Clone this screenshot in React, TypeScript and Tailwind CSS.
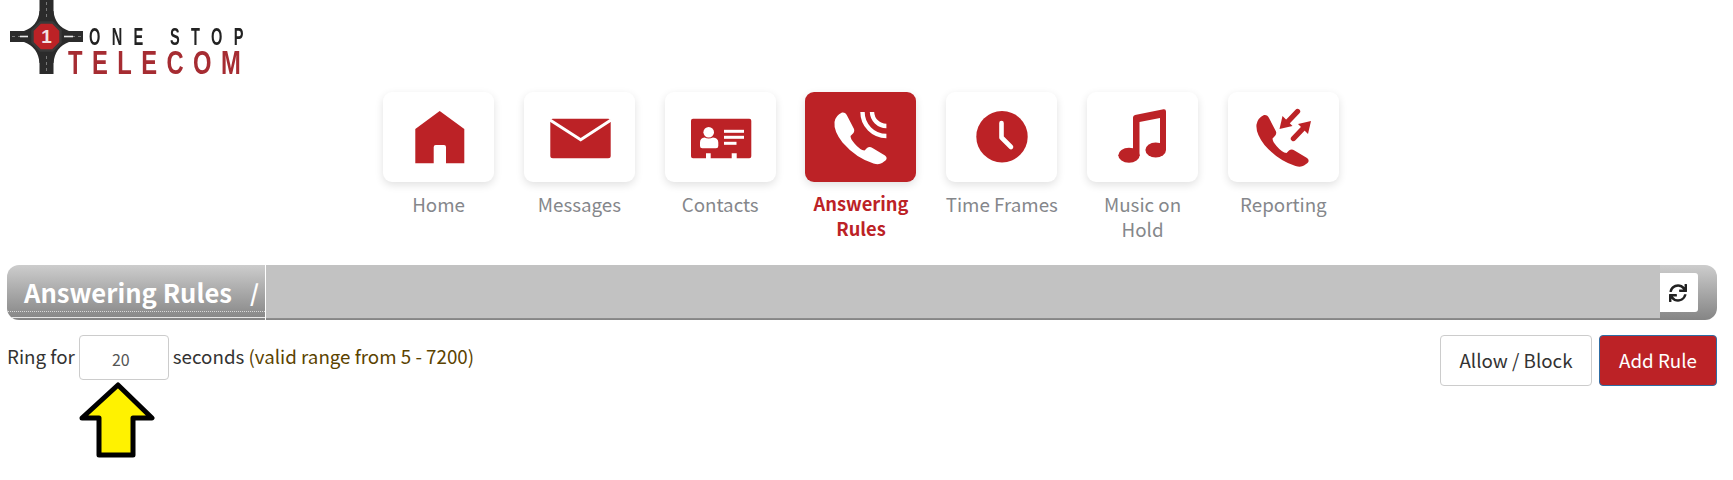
import React from "react";
import { FaSync } from "react-icons/fa";

const RED = "#bc2226";

const PhoneShape = ({ fill }: { fill: string }) => (
  <path
    fill={fill}
    d="M37 20.5Q40.5 20 42 23.5L49 37Q50 40 47 42.5L45.5 44Q45.5 47 49.5 51.5Q55 58 59.5 58.5L62 56Q64.5 54 67.5 56L80 63.5Q83 66 80.5 68.5L77 71Q74 73 68.5 71.5Q51 66 37.5 50.5Q28.5 39 29.5 30Q30.5 23.5 37 20.5Z"
  />
);

const icons: Record<string, (c: string) => React.ReactNode> = {
  home: (c) => (
    <path
      fill={c}
      d="M56.7 19L81.3 37V71.3H63V55Q63 53 61 53H52.7Q50.7 53 50.7 55V71.3H32.3V37Z"
    />
  ),
  mail: (c) => (
    <>
      <rect x="26.3" y="26.8" width="60.4" height="39.4" rx="2.5" fill={c} />
      <path d="M26 28L56.7 47.8L87 28" fill="none" stroke="#fff" strokeWidth="3" />
    </>
  ),
  contact: (c) => (
    <>
      <path
        fill={c}
        d="M28 26.8H84.3Q86.3 26.8 86.3 28.8V64.2Q86.3 66.2 84.3 66.2H71.7V61.2H66.7V66.2H45.7V61.2H41V66.2H28Q26 66.2 26 64.2V28.8Q26 26.8 28 26.8Z"
      />
      <circle cx="43.7" cy="40.2" r="5.3" fill="#fff" />
      <path
        fill="#fff"
        d="M35 54V50.5Q35 46 39.5 45.5Q43.7 47.5 48 45.5Q53.3 46 53.3 50.5V54Q53.3 56.2 51 56.2H37.3Q35 56.2 35 54Z"
      />
      <rect x="59" y="37.8" width="20" height="3" fill="#fff" />
      <rect x="59" y="43.8" width="20" height="3" fill="#fff" />
      <rect x="59" y="49.8" width="12.5" height="3" fill="#fff" />
    </>
  ),
  answer: (c) => (
    <>
      <PhoneShape fill={c} />
      <path
        d="M57.5 20A24 24 0 0 0 81.4 44M67 20A14.4 14.4 0 0 0 81.4 34"
        fill="none"
        stroke={c}
        strokeWidth="4.4"
      />
    </>
  ),
  clock: (c) => (
    <>
      <circle cx="56" cy="44.7" r="25.7" fill={c} />
      <path
        d="M55.5 31V45.5L65 55"
        fill="none"
        stroke="#fff"
        strokeWidth="4.6"
        strokeLinecap="round"
        strokeLinejoin="round"
      />
    </>
  ),
  music: (c) => (
    <>
      <path
        fill={c}
        d="M46 25.5Q46 23.5 48 23L76.5 17.3Q79 17 79 19.5V58H73V26L52.5 30V63.5H46Z"
      />
      <ellipse cx="42" cy="63.2" rx="10.7" ry="7.5" fill={c} />
      <ellipse cx="68.7" cy="58" rx="10.3" ry="7.5" fill={c} />
    </>
  ),
  report: (c) => (
    <>
      <g transform="translate(-1 2.5)">
        <PhoneShape fill={c} />
      </g>
      <path d="M69.5 19.5L59 30.5" stroke={c} strokeWidth="5.4" strokeLinecap="round" />
      <path d="M51.5 37L54.5 24L64.5 34Z" fill={c} />
      <path d="M65.5 46.5L76 35.5" stroke={c} strokeWidth="5.4" strokeLinecap="round" />
      <path d="M83 29L80 42L70 32Z" fill={c} />
    </>
  ),
};

const items = [
  { key: "home", label: "Home" },
  { key: "mail", label: "Messages" },
  { key: "contact", label: "Contacts" },
  { key: "answer", label: "Answering Rules", active: true },
  { key: "clock", label: "Time Frames" },
  { key: "music", label: "Music on Hold" },
  { key: "report", label: "Reporting" },
];

function Logo() {
  return (
    <svg width="250" height="78" viewBox="0 0 250 78" className="-ml-[7px] block blur-[0.5px]">
      <rect x="10" y="31" width="73" height="11" fill="#2b2b2b" />
      <rect x="39.5" y="0" width="14" height="74" fill="#2b2b2b" />
      <path
        d="M39.5 11Q38 26 24 31V42Q38 47 39.5 63H53.5Q55 47 69 42V31Q55 26 53.5 11Z"
        fill="#2b2b2b"
      />
      <path
        d="M12 36.5H27M66 36.5H81M46.5 2V17M46.5 56V72"
        stroke="#9a9a9a"
        strokeWidth="0.7"
        strokeDasharray="3 3"
      />
      <path d="M64 36.5H73" stroke="#e8e8e8" strokeWidth="1.6" />
      <path d="M20 36.5H28" stroke="#e8e8e8" strokeWidth="1.6" />
      <path
        d="M40.5 22.5H52.5L60.5 30.5V42.5L52.5 50.5H40.5L32.5 42.5V30.5Z"
        fill="#bc2226"
        stroke="#3a3a3a"
        strokeWidth="2.4"
      />
      <text
        x="46.5"
        y="43"
        textAnchor="middle"
        fontFamily="Liberation Sans, sans-serif"
        fontWeight="700"
        fontSize="19"
        fill="#f3e3e3"
      >
        1
      </text>
      <g transform="translate(89 45) scale(0.62 1)">
        <text
          x="0"
          y="0"
          fontFamily="Liberation Sans, sans-serif"
          fontWeight="700"
          fontSize="23.5"
          fill="#222"
          textLength="249"
          lengthAdjust="spacing"
        >
          ONE STOP
        </text>
      </g>
      <g transform="translate(68 74) scale(0.72 1)">
        <text
          x="0"
          y="0"
          fontFamily="Liberation Sans, sans-serif"
          fontWeight="700"
          fontSize="33"
          fill="#a62c32"
          textLength="240"
          lengthAdjust="spacing"
        >
          TELECOM
        </text>
      </g>
    </svg>
  );
}

function NavItem({ item }: { item: (typeof items)[number] }) {
  const color = item.active ? "#fff" : RED;
  return (
    <div className="flex w-[140.8px] shrink-0 flex-col items-center">
      <div
        className={`h-[90px] w-[111px] rounded-[9px] shadow-[0_3px_8px_rgba(0,0,0,0.12)] ${
          item.active ? "bg-[#bc2226]" : "bg-white"
        }`}
      >
        <svg width="111" height="90" viewBox="0 0 111 90" className="block">
          {icons[item.key](color)}
        </svg>
      </div>
      <div
        className={`mt-[9px] w-[130px] text-center leading-[25px] ${
          item.active ? "text-[18.3px] font-semibold text-[#bc2226]" : "text-[18.75px] text-[#85878b]"
        }`}
      >
        {item.key === "answer" ? (
          <>
            Answering
            <br />
            Rules
          </>
        ) : item.key === "music" ? (
          <>
            Music on
            <br />
            Hold
          </>
        ) : (
          item.label
        )}
      </div>
    </div>
  );
}

export default function App() {
  return (
    <div
      className="relative h-[480px] w-[1733px] overflow-hidden bg-white pl-[7px] pr-[16px]"
      style={{ fontFamily: '"Noto Sans CJK SC", "Noto Sans", sans-serif' }}
    >
      <div className="h-[92px]">
        <Logo />
      </div>
      <div className="flex h-[173px] justify-center pr-[2px]">
        {items.map((it) => (
          <NavItem key={it.key} item={it} />
        ))}
      </div>
      <div className="flex h-[55px] items-stretch overflow-hidden rounded-[12px] bg-gradient-to-b from-[#cdcdcd] to-[#858585]">
        <div className="relative flex w-[259px] items-start border-r border-white pl-[17px] pt-[11px]">
          <span className="whitespace-nowrap text-[25.6px] font-semibold leading-[32px] text-white">
            Answering Rules
          </span>
          <span className="ml-[18px] text-[23px] font-semibold leading-[32px] text-white">/</span>
          <div className="absolute bottom-[8px] left-0 right-0 border-b border-dotted border-[#d8d8d8]" />
          <div className="absolute bottom-[2px] left-0 right-0 border-b border-[#e8e8e8]" />
        </div>
        <div className="h-[54px] flex-1 border-b border-[#8c8c8c] bg-[#c2c2c2]" />
        <div className="flex w-[57px] items-start pt-[8px]">
          <button className="flex h-[39px] w-[38px] items-center justify-center rounded-r-[3px] bg-white pr-[3px] text-[#222]">
            <FaSync size={18} />
          </button>
        </div>
      </div>
      <div className="mt-[15px] flex items-start justify-between">
        <div className="flex items-start text-[18.75px] leading-[25px] text-[#333]">
          <span className="mt-[8px]">Ring for</span>
          <input
            readOnly
            value="20"
            className="ml-[4px] mr-[4px] h-[45px] w-[90px] rounded-[4px] border border-[#cccccc] bg-white pr-[6px] pt-[2px] text-center text-[16px] text-[#555] outline-none"
          />
          <span className="mt-[8px]">
            seconds <span className="text-[#5b4300]">(valid range from 5 - 7200)</span>
          </span>
        </div>
        <div className="flex gap-[7px]">
          <button className="h-[51px] w-[152px] rounded-[4px] border border-[#cccccc] bg-white text-[18.75px] text-[#333]">
            Allow / Block
          </button>
          <button className="h-[51px] w-[118px] rounded-[4px] border border-[#2e6da4] bg-[#bc2226] text-[18.75px] text-white">
            Add Rule
          </button>
        </div>
      </div>
      <svg width="78" height="77" viewBox="0 0 78 77" className="absolute left-[79px] top-[382px]">
        <path
          d="M39 3L73 36H54V73H20V36H3Z"
          fill="#fff200"
          stroke="#000"
          strokeWidth="5"
          strokeLinejoin="round"
        />
      </svg>
    </div>
  );
}
